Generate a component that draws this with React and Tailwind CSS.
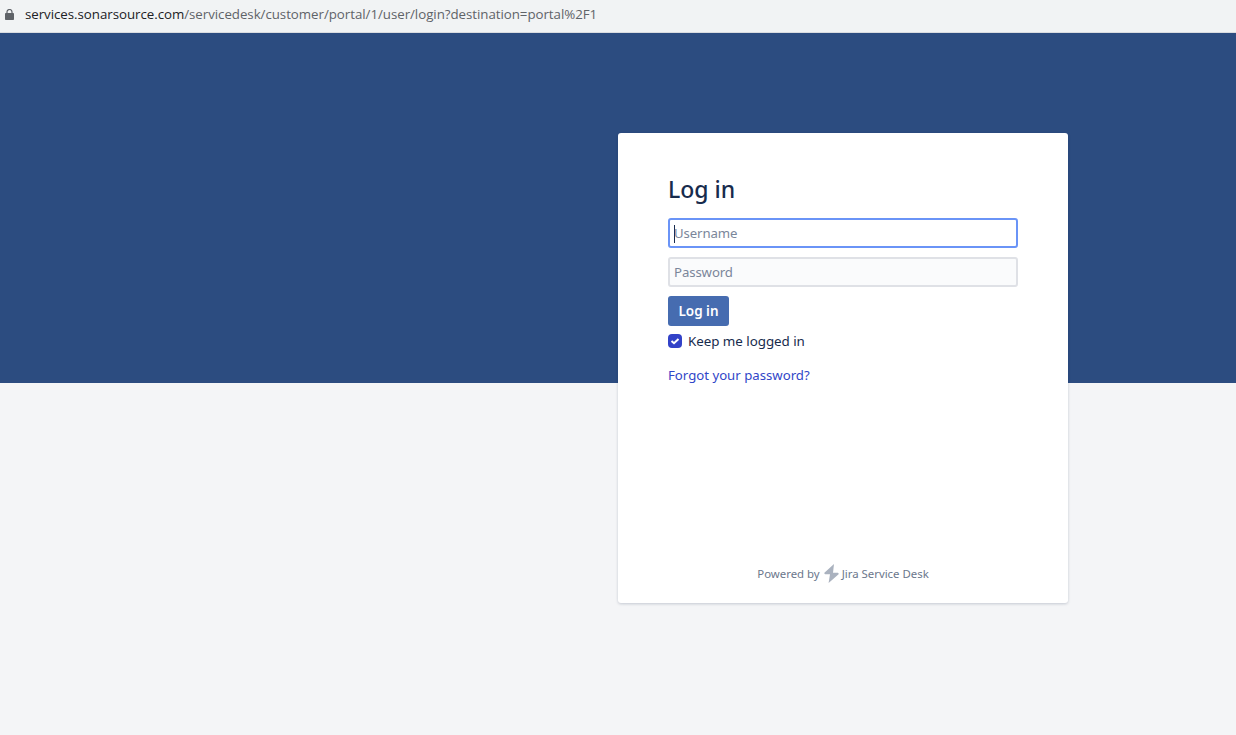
import React from "react";

function LockIcon() {
  return (
    <svg width="9" height="11" viewBox="0 0 9 11" className="shrink-0 mr-[11px]">
      <path d="M2 4.5 V3 a2.5 2.5 0 0 1 5 0 V4.5" fill="none" stroke="#5f6368" strokeWidth="1.2" />
      <rect x="0" y="4" width="9" height="7" rx="0.8" fill="#5f6368" />
    </svg>
  );
}

function BoltMark() {
  return (
    <svg width="15" height="19" viewBox="0 0 15 19" className="ml-[4px] mr-[3px] shrink-0">
      <path d="M10 0 L0.4 8.8 Q0 10 1.2 10.2 L6 10.2 L4.6 19 L14.6 10.2 Q15 9 13.8 8.8 L9 8.8 Z" fill="#aab2bf" />
    </svg>
  );
}

export default function App() {
  return (
    <div className="min-h-[735px] bg-[#f4f5f7] font-['Noto_Sans','Open_Sans',sans-serif] overflow-hidden">
      <div className="h-[33px] bg-[#f1f3f4] border-b border-[#dadce0] flex items-center pl-[5px] pb-[3px]">
        <LockIcon />
        <div className="text-[13.3px] tracking-[-0.04px] text-[#5f6368] font-['Open_Sans','Noto_Sans',sans-serif]">
          <span className="text-[#202124]">services.sonarsource.com</span>
          /servicedesk/customer/portal/1/user/login?destination=portal%2F1
        </div>
      </div>

      <div className="h-[350px] bg-[#2c4c80]"></div>

      <div className="ml-[618px] -mt-[250px] w-[450px] h-[470px] relative bg-white rounded-[3px] shadow-[0_1px_3px_rgba(9,30,66,0.2)] pt-[40px] px-[50px] flex flex-col">
        <h1 className="text-[23px] leading-[32px] font-medium text-[#172b4d]">Log in</h1>

        <div className="mt-[13px] h-[30px] border-2 border-[#6a94f7] rounded-[3px] bg-white flex items-center pl-[4px] pt-[1px] text-[13.2px] tracking-[-0.1px] text-[#7a869a]">
          <span className="w-px h-[18px] bg-[#172b4d] -mr-px"></span>
          <span>Username</span>
        </div>
        <div className="mt-[9px] h-[30px] border-2 border-[#dfe1e6] rounded-[3px] bg-[#fafbfc] flex items-center pl-[4px] pt-[1px] text-[13.2px] tracking-[-0.1px] text-[#7a869a]">
          Password
        </div>

        <button className="mt-[9px] w-[61px] h-[30px] rounded-[3px] bg-[#466cb0] text-white text-[13.5px] font-semibold flex items-center justify-center">
          Log in
        </button>

        <div className="mt-[7px] flex items-center h-[16px]">
          <span className="w-[14px] h-[14px] rounded-[4px] bg-[#3242c8] flex items-center justify-center">
            <svg width="10" height="10" viewBox="0 0 10 10">
              <path d="M1.5 5 L4 7.2 L8.5 3" fill="none" stroke="#fff" strokeWidth="2" />
            </svg>
          </span>
          <span className="ml-[6px] text-[13.4px] tracking-[-0.05px] leading-[16px] text-[#172b4d] pb-[1px]">Keep me logged in</span>
        </div>

        <a className="mt-[16px] text-[13.2px] leading-[20px] text-[#3146c8]">Forgot your password?</a>

        <div className="mt-auto mb-[20px] flex items-center justify-center text-[11.4px] text-[#6b778c]">
          <span>Powered by</span>
          <BoltMark />
          <span>Jira Service Desk</span>
        </div>
      </div>
    </div>
  );
}
